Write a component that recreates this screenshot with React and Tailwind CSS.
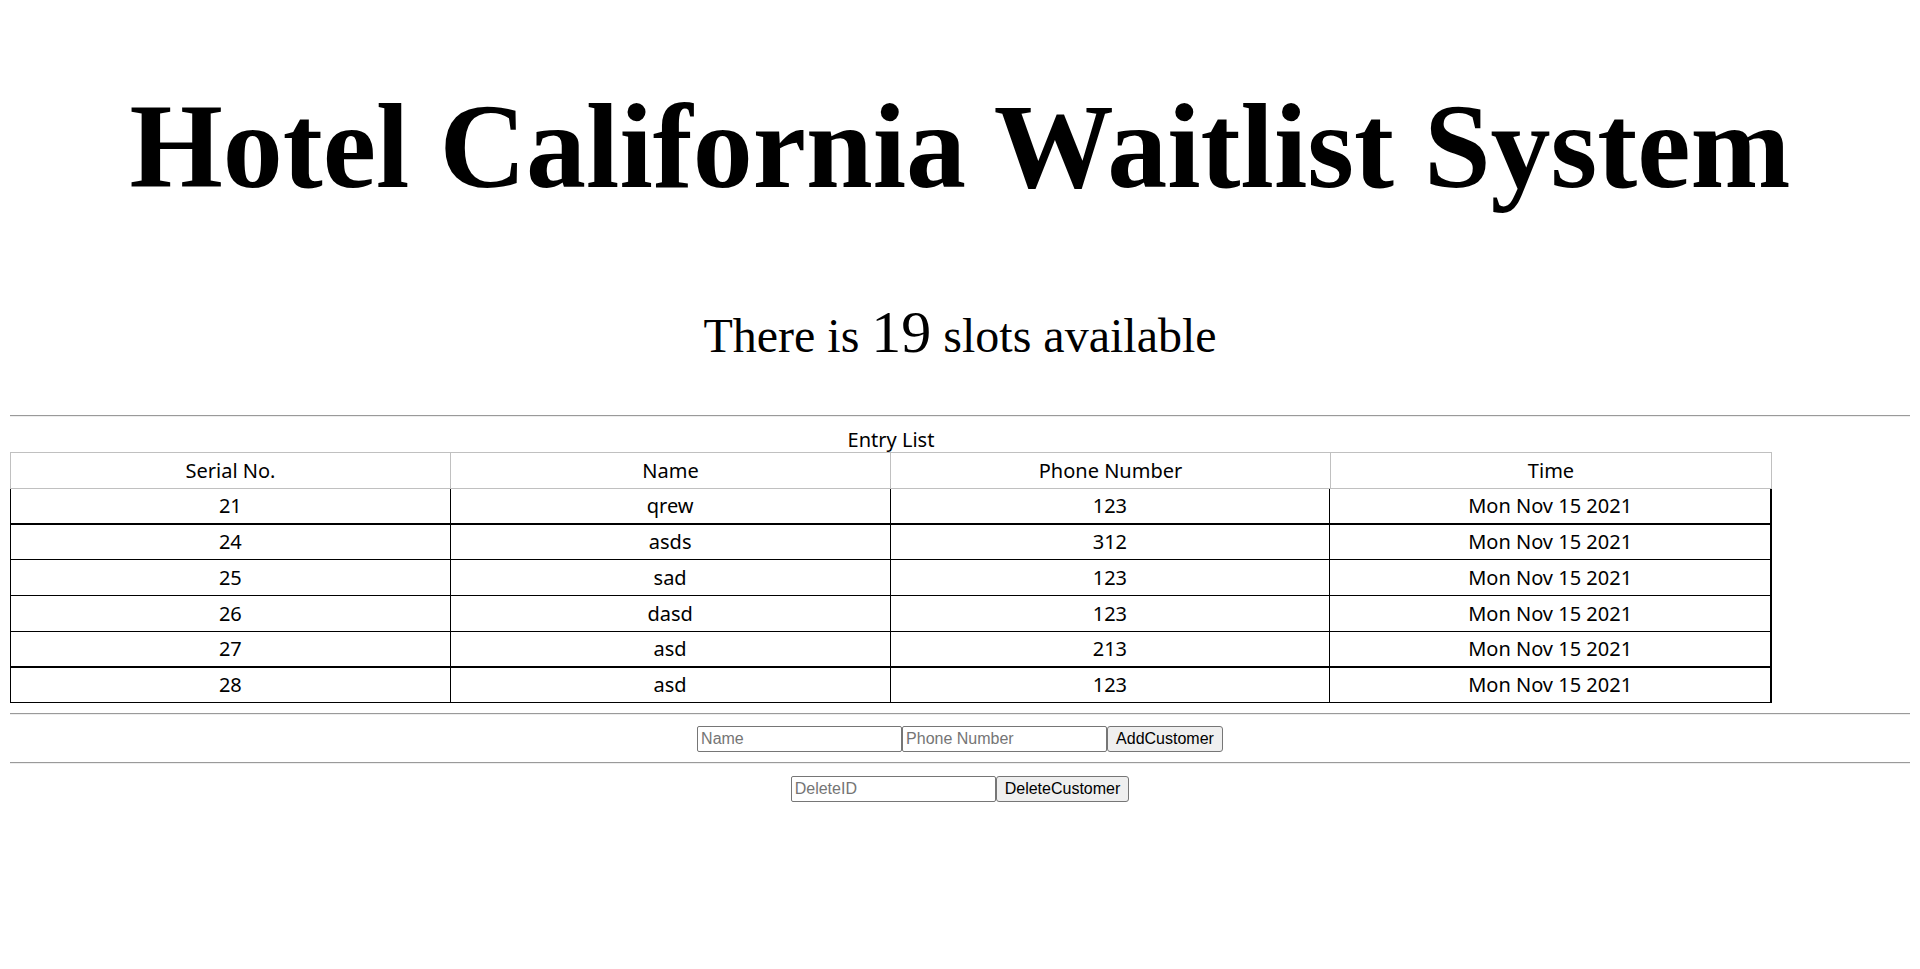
const ENTRIES = [
  { id: 21, name: "qrew", phone: "123", time: "Mon Nov 15 2021", h: "h-[36px]", thick: true },
  { id: 24, name: "asds", phone: "312", time: "Mon Nov 15 2021", h: "h-[35px]" },
  { id: 25, name: "sad", phone: "123", time: "Mon Nov 15 2021", h: "h-[36px]" },
  { id: 26, name: "dasd", phone: "123", time: "Mon Nov 15 2021", h: "h-[36px]" },
  { id: 27, name: "asd", phone: "213", time: "Mon Nov 15 2021", h: "h-[36px]", thick: true },
  { id: 28, name: "asd", phone: "123", time: "Mon Nov 15 2021", h: "h-[35px]" },
];

function Rule() {
  return <div className="my-[10px] h-0 border-t border-b border-t-[#9a9a9a] border-b-[#eeeeee]" />;
}

function Field({ placeholder }) {
  return (
    <input
      placeholder={placeholder}
      className="h-[26px] w-[205px] rounded-[2px] border border-[#767676] bg-white px-[3px] text-[16px] text-black placeholder:text-[#757575] outline-none"
    />
  );
}

function Button({ children }) {
  return (
    <button className="h-[26px] rounded-[3px] border border-[#767676] bg-[#efefef] px-[8px] text-[16px] leading-none text-black">
      {children}
    </button>
  );
}

export default function App() {
  return (
    <div className="flex min-h-screen flex-col bg-white px-[10px] pt-[81px] text-black">
      <h1 className="text-center font-['Liberation_Serif',serif] text-[120px] font-bold leading-[132px]">
        Hotel California Waitlist System
      </h1>

      <p className="mt-[89px] text-center font-['Liberation_Serif',serif] text-[48px] leading-[60px]">
        There is <span className="text-[60px]">19</span> slots available
      </p>

      <div className="mt-[39px]">
        <Rule />
      </div>

      <div className="w-[1762px] font-['Noto_Sans',sans-serif] text-[20px]">
        <div className="h-[25px] text-center leading-[25px]">Entry List</div>

        <div className="grid h-[37px] grid-cols-4 border border-[#c0c0c0]">
          {["Serial No.", "Name", "Phone Number", "Time"].map((h, i) => (
            <div
              key={h}
              className={`flex items-center justify-center ${i < 3 ? "border-r border-[#c0c0c0]" : ""}`}
            >
              {h}
            </div>
          ))}
        </div>

        {ENTRIES.map((e) => (
          <div
            key={e.id}
            className={`grid ${e.h} grid-cols-4 border-l border-r-2 border-black ${
              e.thick ? "border-b-2" : "border-b"
            }`}
          >
            {[e.id, e.name, e.phone, e.time].map((v, i) => (
              <div
                key={i}
                className={`flex items-center justify-center ${i < 3 ? "border-r border-black" : ""}`}
              >
                {v}
              </div>
            ))}
          </div>
        ))}
      </div>

      <Rule />
      <div className="flex justify-center pt-[1px] font-['Liberation_Sans',Arial,sans-serif]">
        <Field placeholder="Name" />
        <Field placeholder="Phone Number" />
        <Button>AddCustomer</Button>
      </div>
      <Rule />
      <div className="flex justify-center pt-[2px] font-['Liberation_Sans',Arial,sans-serif]">
        <Field placeholder="DeleteID" />
        <Button>DeleteCustomer</Button>
      </div>
    </div>
  );
}
